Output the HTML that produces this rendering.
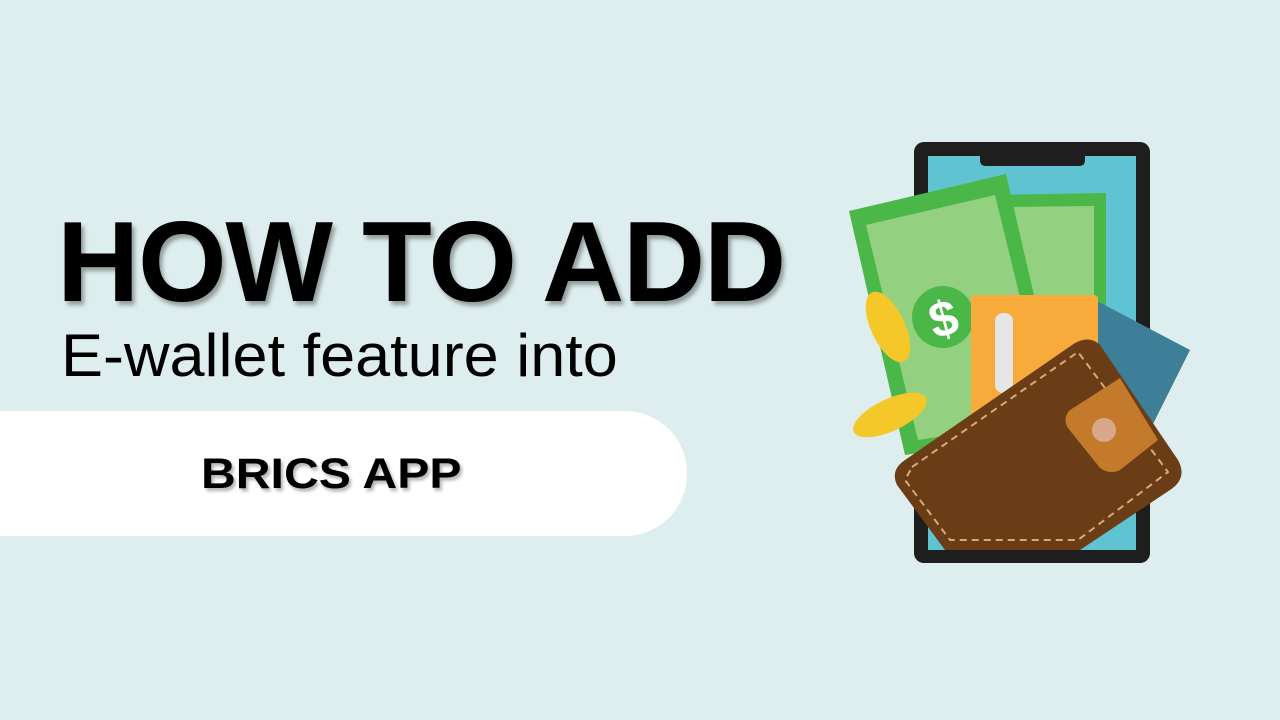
<!DOCTYPE html>
<html><head><style>
html,body{margin:0;padding:0}
body{width:1280px;height:720px;background:#deeeee;position:relative;overflow:hidden;font-family:"Liberation Sans",Arial,sans-serif}
.t{position:absolute;white-space:nowrap;color:#000;line-height:1;transform-origin:0 0}
#h1{left:57px;top:206px;font-size:114px;font-weight:bold;text-shadow:3px 4px 4px rgba(0,0,0,.35);letter-spacing:-1.3px}
#h2{left:61px;top:326px;font-size:60px;transform:scaleX(1.05)}
#pill{position:absolute;left:0;top:411px;width:687px;height:125px;background:#fff;border-radius:0 62px 62px 0}
#h3{left:201px;top:453px;font-size:43px;font-weight:bold;text-shadow:2px 3px 3px rgba(0,0,0,.3);transform:scaleX(1.12)}
svg{position:absolute;left:0;top:0}
</style></head><body>
<div id="h1" class="t">HOW TO ADD</div>
<div id="h2" class="t">E-wallet feature into</div>
<div id="pill"></div>
<div id="h3" class="t">BRICS APP</div>
<svg width="1280" height="720" viewBox="0 0 1280 720">
<rect x="914" y="142" width="236" height="421" rx="10" fill="#1e1e1e"/>
<rect x="928" y="156" width="208" height="394" fill="#5fc3d1"/>
<path d="M980 156 H1085 V160 Q1085 166 1079 166 H986 Q980 166 980 160Z" fill="#1e1e1e"/>
<polygon points="985,195 1106,193 1106,440 1000,440" fill="#4cb749"/>
<polygon points="1000,207 1094,206 1094,430 1008,430" fill="#93d07f"/>
<polygon points="849,211 1006,174 1065,430 905,455" fill="#4cb749"/>
<polygon points="866,225 995,195 1050,420 918,440" fill="#93d07f"/>
<circle cx="943" cy="317" r="31" fill="#4cb749"/>
<text x="943" y="336" font-size="50" font-weight="bold" fill="#fff" text-anchor="middle" font-family="Liberation Sans" transform="rotate(-15 943 317)">$</text>
<ellipse cx="888" cy="327" rx="17" ry="38" fill="#f5c82a" transform="rotate(-25 888 327)"/>
<ellipse cx="890" cy="415" rx="40" ry="16" fill="#f5c82a" transform="rotate(-25 890 415)"/>
<polygon points="1095,300 1190,350 1150,430 1060,390" fill="#3d7f98"/>
<rect x="971" y="295" width="127" height="150" rx="4" fill="#f8aa3a"/>
<rect x="995" y="313" width="18" height="80" rx="8" fill="#e6e6e6"/>
<path d="M905 460 L1075 343 Q1090 335 1100 345 L1178 460 Q1188 478 1170 490 L1080 550 H945 L897 485 Q890 470 905 460Z" fill="#6b3d17"/>
<path d="M912 467 L1078 352 L1168 472 L1078 540 H950 L905 480Z" fill="none" stroke="#d9a77a" stroke-width="2" stroke-dasharray="7 5"/>
<path d="M1070 410 L1120 378 L1158 440 L1120 470 Q1110 475 1100 468 L1068 428 Q1062 418 1070 410Z" fill="#c47a2b"/>
<circle cx="1104" cy="430" r="12" fill="#d9a88a"/>
</svg>
</body></html>
